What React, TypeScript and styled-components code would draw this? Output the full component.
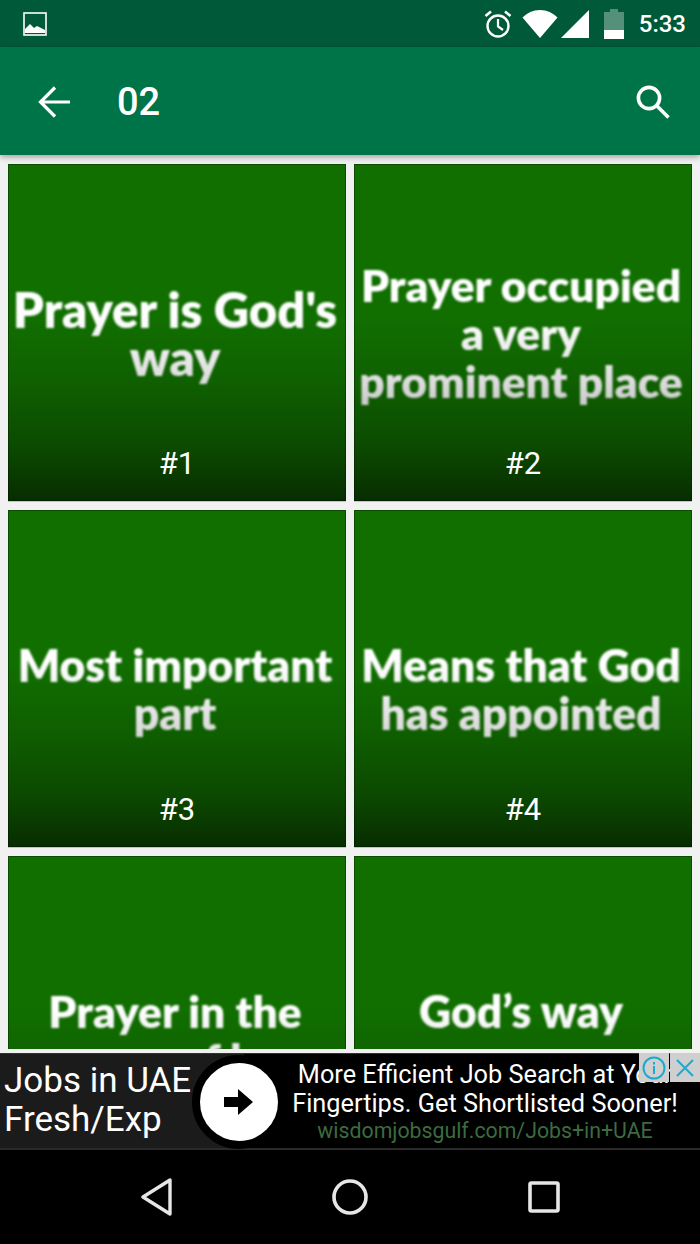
import React from "react";
import styled, { createGlobalStyle } from "styled-components";

const GlobalStyle = createGlobalStyle`
  html, body {
    margin: 0;
    padding: 0;
    background: #000;
  }
  * {
    box-sizing: border-box;
  }
`;

const Screen = styled.div`
  width: 700px;
  height: 1244px;
  display: flex;
  flex-direction: column;
  overflow: hidden;
  font-family: Roboto, "Liberation Sans", sans-serif;
  color: #fff;
`;

const StatusBar = styled.div`
  height: 47px;
  flex: none;
  display: flex;
  align-items: center;
  justify-content: space-between;
  padding: 0 14px 0 23px;
  background: #005a39;
`;

const StatusIcons = styled.div`
  display: flex;
  align-items: center;
`;

const Clock = styled.span`
  font-size: 24px;
  font-weight: 500;
  margin-left: 15px;
`;

const Toolbar = styled.header`
  height: 108px;
  flex: none;
  display: flex;
  align-items: center;
  padding: 2px 29px 0 38px;
  background: #007449;
  box-shadow: 0 2px 6px rgba(0, 0, 0, 0.35);
  position: relative;
  z-index: 1;
`;

const Title = styled.h1`
  flex: 1;
  margin: 0 0 0 47px;
  font-size: 38px;
  font-weight: 500;
`;

const Content = styled.main`
  flex: 1;
  min-height: 0;
  display: flex;
  background: #f1f1f1;
  padding: 9px 8px 4px;
`;

const GridClip = styled.div`
  flex: 1;
  min-height: 0;
  overflow: hidden;
`;

const Grid = styled.div`
  display: grid;
  grid-template-columns: 338px 338px;
  grid-auto-rows: 337px;
  gap: 9px 8px;
`;

const Tile = styled.article`
  position: relative;
  display: flex;
  align-items: center;
  justify-content: center;
  padding-right: 4px;
  background: #116f00;
  box-shadow: 0 1px 0 #c4c4c4;

  &::after {
    content: "";
    position: absolute;
    inset: 0;
    box-shadow: inset 0 0 0 1px rgba(0, 0, 0, 0.3);
    background: linear-gradient(
      to bottom,
      rgba(0, 0, 0, 0) 45%,
      rgba(0, 0, 0, 0.14) 65%,
      rgba(0, 0, 0, 0.35) 85%,
      rgba(0, 0, 0, 0.6) 100%
    );
  }
`;

const TileText = styled.div<{ $shift: number; $size: number }>`
  width: 100%;
  margin-top: ${(p) => p.$shift}px;
  text-align: center;
  font-family: Lato, "Open Sans", sans-serif;
  font-weight: 800;
  font-size: ${(p) => p.$size}px;
  line-height: 48px;
  color: #fff;
  filter: blur(0.9px);
  white-space: nowrap;
`;

const Caption = styled.span`
  position: absolute;
  left: 0;
  right: 0;
  bottom: 20px;
  z-index: 1;
  text-align: center;
  font-size: 31px;
  line-height: 34px;
`;

const AdBar = styled.aside`
  height: 97px;
  flex: none;
  position: relative;
  display: flex;
  background: #000;
  border-top: 1px solid #333;
  border-bottom: 2px solid #2a2a2a;
`;

const AdLeft = styled.div`
  width: 244px;
  flex: none;
  padding: 7px 0 0 4px;
  background: #1b1b1b;
  font-size: 35px;
  line-height: 39px;
`;

const AdCircle = styled.div`
  position: absolute;
  left: 192px;
  top: 1px;
  width: 94px;
  height: 94px;
  border-radius: 50%;
  background: #fff;
  border: 8px solid #000;
  display: flex;
  align-items: center;
  justify-content: center;
`;

const AdRight = styled.div`
  flex: 1;
  min-width: 0;
  padding: 6px 0 0 26px;
  text-align: center;
  font-size: 25.3px;
  line-height: 29px;
  white-space: nowrap;
  overflow: hidden;
`;

const AdUrl = styled.div`
  color: #3c6b3f;
  font-size: 21.3px;
  line-height: 26px;
`;

const AdBadges = styled.div`
  position: absolute;
  top: -1px;
  right: 0;
  display: flex;
  gap: 1px;
`;

const AdBadge = styled.div`
  width: 30px;
  height: 29px;
  background: #cfcfcf;
  display: flex;
  align-items: center;
  justify-content: center;
`;

const NavBar = styled.nav`
  height: 94px;
  flex: none;
  background: #000;
  display: flex;
  align-items: center;
  gap: 160px;
  padding-left: 140px;
`;

const tiles = [
  { lines: ["Prayer is God's", "way"], size: 49, shift: 0, n: 1 },
  { lines: ["Prayer occupied", "a very", "prominent place"], size: 44.3, shift: 0, n: 2 },
  { lines: ["Most important", "part"], size: 44.4, shift: 21, n: 3 },
  { lines: ["Means that God", "has appointed"], size: 44.4, shift: 21, n: 4 },
  { lines: ["Prayer in the", "course of love"], size: 44.3, shift: 21, n: 5 },
  { lines: ["God’s way"], size: 44.5, shift: -27, n: 6 },
];

function StatusImageIcon() {
  return (
    <svg width="24" height="24" viewBox="0 0 24 24">
      <rect x="1" y="1" width="22" height="22" fill="none" stroke="#fff" strokeWidth="1.6" />
      <path d="M2 21v-4l5-5 4 4 3-2 8 4v3z" fill="#fff" />
    </svg>
  );
}

function AlarmIcon() {
  return (
    <svg width="30" height="30" viewBox="0 0 30 30" fill="none" stroke="#fff">
      <circle cx="15" cy="17" r="10.5" strokeWidth="2.4" />
      <path d="M15 10v7.5l5 3.5" strokeWidth="2.2" />
      <path d="M2.5 7 8 2.5M27.5 7 22 2.5" strokeWidth="2.6" />
    </svg>
  );
}

function WifiIcon() {
  return (
    <svg width="36" height="30" viewBox="0 0 36 30" style={{ marginLeft: 9 }}>
      <path d="M0.5 8.5C5 4 11 1 18 1s13 3 17.5 7.5L18 29z" fill="#fff" />
    </svg>
  );
}

function SignalIcon() {
  return (
    <svg width="28" height="28" viewBox="0 0 28 28" style={{ marginLeft: 3 }}>
      <path d="M0 28 28 0v28z" fill="#fff" />
    </svg>
  );
}

function BatteryIcon() {
  return (
    <svg width="20" height="30" viewBox="0 0 20 30" style={{ marginLeft: 15 }}>
      <path d="M0 3h6V0h8v3h6v19H0z" fill="#fff" opacity="0.33" />
      <rect x="0" y="21" width="20" height="9" fill="#fff" />
    </svg>
  );
}

function BackArrow() {
  return (
    <svg width="32" height="32" viewBox="0 0 32 32" fill="none" stroke="#fff" strokeWidth="3.2">
      <path d="M32 16H3M17 1.5 2.5 16 17 30.5" />
    </svg>
  );
}

function SearchIcon() {
  return (
    <svg width="36" height="36" viewBox="0 0 36 36" fill="none" stroke="#fff" strokeWidth="3.6">
      <circle cx="14" cy="14" r="10.6" />
      <path d="M21.5 21.5 33.5 33.5" />
    </svg>
  );
}

function AdArrow() {
  return (
    <svg width="30" height="26" viewBox="0 0 30 26">
      <path d="M0 8h14V0l15 13-15 13v-8H0z" fill="#000" />
    </svg>
  );
}

function InfoIcon() {
  return (
    <svg width="24" height="24" viewBox="0 0 24 24" fill="none" stroke="#1fa9cf" strokeWidth="2">
      <circle cx="12" cy="12" r="10.5" />
      <path d="M12 10v8M12 6v2.4" />
    </svg>
  );
}

function CloseIcon() {
  return (
    <svg width="20" height="20" viewBox="0 0 20 20" fill="none" stroke="#1fa9cf" strokeWidth="2">
      <path d="M2 2l16 16M18 2 2 18" />
    </svg>
  );
}

function BackKey() {
  return (
    <svg width="32" height="38" viewBox="0 0 32 38" fill="none" stroke="#e6e6e6" strokeWidth="3.4" strokeLinejoin="round">
      <path d="M30 2v34L3 19z" />
    </svg>
  );
}

function HomeKey() {
  return (
    <svg width="36" height="36" viewBox="0 0 36 36" fill="none" stroke="#e6e6e6" strokeWidth="3.6">
      <circle cx="18" cy="18" r="16" />
    </svg>
  );
}

function RecentKey() {
  return (
    <svg width="32" height="32" viewBox="0 0 32 32" fill="none" stroke="#e6e6e6" strokeWidth="3.6" strokeLinejoin="round">
      <rect x="2" y="2" width="28" height="28" rx="1.5" />
    </svg>
  );
}

export default function App() {
  return (
    <Screen>
      <GlobalStyle />
      <StatusBar>
        <StatusImageIcon />
        <StatusIcons>
          <AlarmIcon />
          <WifiIcon />
          <SignalIcon />
          <BatteryIcon />
          <Clock>5:33</Clock>
        </StatusIcons>
      </StatusBar>
      <Toolbar>
        <BackArrow />
        <Title>02</Title>
        <SearchIcon />
      </Toolbar>
      <Content>
        <GridClip>
          <Grid>
            {tiles.map((tile) => (
              <Tile key={tile.n}>
                <TileText $shift={tile.shift} $size={tile.size}>
                  {tile.lines.map((line) => (
                    <div key={line}>{line}</div>
                  ))}
                </TileText>
                <Caption>#{tile.n}</Caption>
              </Tile>
            ))}
          </Grid>
        </GridClip>
      </Content>
      <AdBar>
        <AdLeft>
          Jobs in UAE
          <br />
          Fresh/Exp
        </AdLeft>
        <AdCircle>
          <AdArrow />
        </AdCircle>
        <AdRight>
          More Efficient Job Search at Your
          <br />
          Fingertips. Get Shortlisted Sooner!
          <AdUrl>wisdomjobsgulf.com/Jobs+in+UAE</AdUrl>
        </AdRight>
        <AdBadges>
          <AdBadge>
            <InfoIcon />
          </AdBadge>
          <AdBadge>
            <CloseIcon />
          </AdBadge>
        </AdBadges>
      </AdBar>
      <NavBar>
        <BackKey />
        <HomeKey />
        <RecentKey />
      </NavBar>
    </Screen>
  );
}
